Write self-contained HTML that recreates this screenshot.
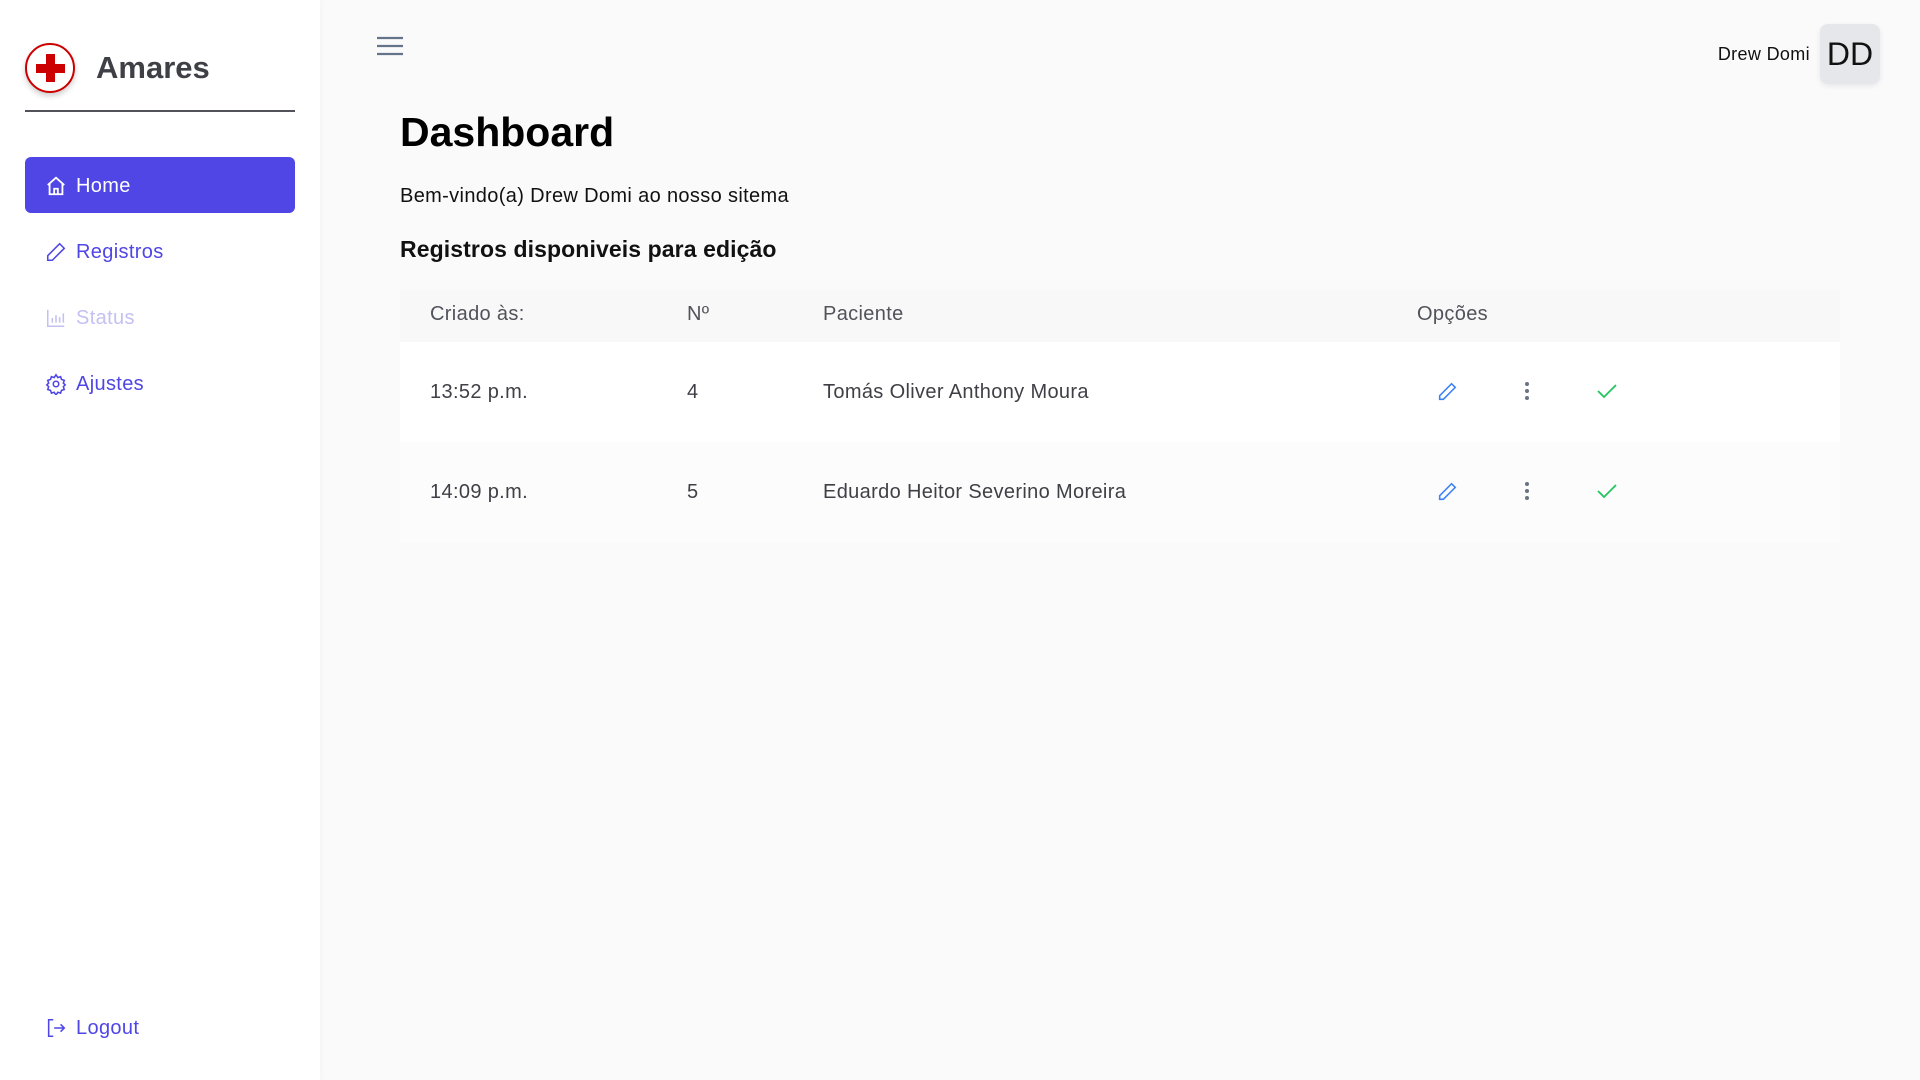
<!DOCTYPE html>
<html><head><meta charset="utf-8"><style>
*{box-sizing:border-box;margin:0;padding:0}
body{width:1920px;height:1080px;background:#fafafa;font-family:"Liberation Sans",sans-serif;position:relative;overflow:hidden;letter-spacing:0.35px}
.side{position:absolute;left:0;top:0;width:320px;height:1080px;background:#fff;box-shadow:1px 0 6px rgba(0,0,0,.03)}
.logo{position:absolute;left:25px;top:43px;width:50px;height:50px;border-radius:50%;border:2px solid #c00;box-shadow:0 3px 6px rgba(0,0,0,.2);background:#fff}
.brand{position:absolute;left:96px;top:50px;font-size:31px;font-weight:bold;color:#3f3f46;letter-spacing:0}
.hr{position:absolute;left:25px;top:110px;width:270px;height:2px;background:#52525b}
.nav{position:absolute;left:25px;width:270px;height:56px;border-radius:6px;display:flex;align-items:center;padding-left:20px;padding-top:2px;font-size:20px;color:#4f46e5}
.nav svg{margin-right:9px}
.th,.td{position:absolute;font-size:20px}
.th{color:#52525b}
.td{color:#3f3f46}
</style></head><body>
<div class="side">
<div class="logo"><div style="position:absolute;left:19px;top:9px;width:9px;height:28px;background:#c00"></div><div style="position:absolute;left:9px;top:19px;width:29px;height:9px;background:#c00"></div></div>
<div class="brand">Amares</div>
<div class="hr"></div>
<div class="nav" style="top:157px;background:#4f46e5;color:#fff"><svg width="22" height="22" viewBox="0 0 24 24" fill="none" stroke="#fff" stroke-width="2"><path d="M3 11l9-8 9 8M5 9v12h14V9M10 21v-6h4v6"/></svg>Home</div>
<div class="nav" style="top:223px"><svg width="22" height="22" viewBox="0 0 24 24" fill="none" stroke="#4f46e5" stroke-width="1.7"><path d="M16 3l5 5L8 21H3v-5z"/></svg>Registros</div>
<div class="nav" style="top:289px;color:#c4c0f2"><svg width="22" height="22" viewBox="0 0 24 24" fill="none" stroke="#c4c0f2" stroke-width="1.7"><path d="M3 3v18h18M8 17v-5M12 17v-8M16 17v-6M20 17V7"/></svg>Status</div>
<div class="nav" style="top:355px"><svg width="22" height="22" viewBox="0 0 24 24" fill="none" stroke="#4f46e5" stroke-width="1.7"><circle cx="12" cy="12" r="3"/><path d="M12 2l2 3 3-1 1 3 3 1-1 3 2 2-2 2 1 3-3 1-1 3-3-1-2 3-2-3-3 1-1-3-3-1 1-3-2-2 2-2-1-3 3-1 1-3 3 1z"/></svg>Ajustes</div>
<div class="nav" style="top:999px"><svg width="22" height="22" viewBox="0 0 24 24" fill="none" stroke="#4f46e5" stroke-width="1.7"><path d="M9 3H4v18h5M10 12h11M17 8l4 4-4 4"/></svg>Logout</div>
</div>
<svg style="position:absolute;left:377px;top:36px" width="26" height="20" viewBox="0 0 26 20" stroke="#64748b" stroke-width="2.2"><path d="M0 2h26M0 10h26M0 18h26"/></svg>
<div style="position:absolute;right:110px;top:44px;font-size:18px;color:#111">Drew Domi</div>
<div style="position:absolute;left:1820px;top:24px;width:60px;height:60px;border-radius:8px;background:#e5e7eb;box-shadow:0 2px 6px rgba(0,0,0,.08);font-size:32px;color:#111;text-align:center;line-height:60px;letter-spacing:0">DD</div>
<div style="position:absolute;left:400px;top:109px;font-size:41px;font-weight:bold;color:#000;letter-spacing:0">Dashboard</div>
<div style="position:absolute;left:400px;top:185px;font-size:20px;color:#111">Bem-vindo(a) Drew Domi ao nosso sitema</div>
<div style="position:absolute;left:400px;top:236px;font-size:23px;font-weight:bold;color:#111;letter-spacing:0.1px">Registros disponiveis para edição</div>
<div style="position:absolute;left:400px;top:290px;width:1440px;height:52px;background:#f8f8f8"></div>
<div style="position:absolute;left:400px;top:342px;width:1440px;height:100px;background:#fff"></div>
<div style="position:absolute;left:400px;top:442px;width:1440px;height:100px;background:#fcfcfd"></div>
<div class="th" style="left:430px;top:303px">Criado às:</div>
<div class="th" style="left:687px;top:303px">Nº</div>
<div class="th" style="left:823px;top:303px">Paciente</div>
<div class="th" style="left:1417px;top:303px">Opções</div>
<div class="td" style="left:430px;top:381px">13:52 p.m.</div>
<div class="td" style="left:687px;top:381px">4</div>
<div class="td" style="left:823px;top:381px">Tomás Oliver Anthony Moura</div>
<div class="td" style="left:430px;top:481px">14:09 p.m.</div>
<div class="td" style="left:687px;top:481px">5</div>
<div class="td" style="left:823px;top:481px">Eduardo Heitor Severino Moreira</div>
<svg style="position:absolute;left:1436px;top:381px" width="22" height="22" viewBox="0 0 24 24" fill="none" stroke="#3b82f6" stroke-width="1.7"><path d="M17 3l4 4L8 20H4v-4z"/></svg>
<svg style="position:absolute;left:1436px;top:481px" width="22" height="22" viewBox="0 0 24 24" fill="none" stroke="#3b82f6" stroke-width="1.7"><path d="M17 3l4 4L8 20H4v-4z"/></svg>
<svg style="position:absolute;left:1517px;top:381px" width="20" height="22" viewBox="0 0 20 22" fill="#6b7280"><circle cx="10" cy="3" r="2"/><circle cx="10" cy="10" r="2"/><circle cx="10" cy="17" r="2"/></svg>
<svg style="position:absolute;left:1517px;top:481px" width="20" height="22" viewBox="0 0 20 22" fill="#6b7280"><circle cx="10" cy="3" r="2"/><circle cx="10" cy="10" r="2"/><circle cx="10" cy="17" r="2"/></svg>
<svg style="position:absolute;left:1597px;top:383px" width="20" height="16" viewBox="0 0 20 16" fill="none" stroke="#22c55e" stroke-width="1.8"><path d="M1 8l6 6L19 2"/></svg>
<svg style="position:absolute;left:1597px;top:483px" width="20" height="16" viewBox="0 0 20 16" fill="none" stroke="#22c55e" stroke-width="1.8"><path d="M1 8l6 6L19 2"/></svg>
</body></html>
